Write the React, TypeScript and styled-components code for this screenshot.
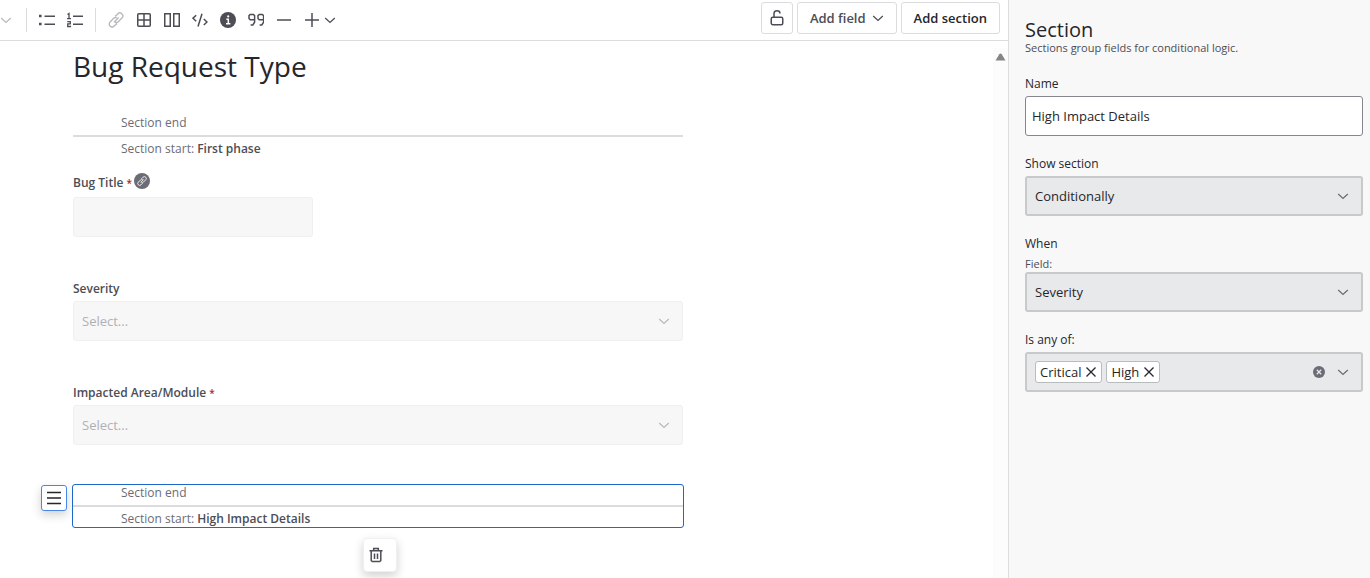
import React from "react";
import styled, { createGlobalStyle, css } from "styled-components";

const GlobalStyle = createGlobalStyle`
  *, *::before, *::after { box-sizing: border-box; }
  body {
    margin: 0;
    background: #ffffff;
    color: #26262b;
    font-family: "Open Sans", "Noto Sans", sans-serif;
    font-size: 13px;
  }
  button, input, select { font: inherit; color: inherit; }
  h1, h2, p { margin: 0; font-weight: 400; }
`;

const Page = styled.div`
  display: flex;
  min-height: 100vh;
`;

const Editor = styled.main`
  flex: 1;
  min-width: 0;
  display: flex;
  flex-direction: column;
`;

const Toolbar = styled.div`
  display: flex;
  align-items: center;
  height: 41px;
  padding-right: 8px;
  border-bottom: 1px solid #dcdcde;
`;

const ToolButton = styled.button<{ $faded?: boolean; $narrow?: boolean }>`
  display: flex;
  align-items: center;
  justify-content: center;
  width: ${(p) => (p.$narrow ? 12 : 28)}px;
  height: 28px;
  padding: 0;
  border: 0;
  background: none;
  color: ${(p) => (p.$faded ? "#b9b9c0" : "#4c4d55")};
`;

const InsertGroup = styled.div`
  display: flex;
  ${ToolButton} + ${ToolButton} {
    margin-left: -2px;
  }
`;

const Separator = styled.span`
  width: 1px;
  height: 24px;
  margin: 0 6px;
  background: #dcdcde;
`;

const LeadSeparator = styled(Separator)`
  margin-left: 14px;
`;

const Actions = styled.div`
  display: flex;
  gap: 4px;
  margin-left: auto;
  padding-bottom: 4px;
`;

const ActionButton = styled.button<{ $strong?: boolean; $square?: boolean }>`
  display: flex;
  align-items: center;
  justify-content: center;
  gap: 6px;
  height: 32px;
  width: ${(p) => (p.$square ? "32px" : "auto")};
  padding: 0 ${(p) => (p.$square ? 0 : 12)}px;
  border: 1px solid #dcdcde;
  border-radius: 3px;
  background: #ffffff;
  color: ${(p) => (p.$strong ? "#26262b" : "#4c4d55")};
  font-weight: 600;
  white-space: nowrap;
`;

const Canvas = styled.div`
  flex: 1;
  display: flex;
`;

const Document = styled.div`
  flex: 1;
  min-width: 0;
  padding: 8px 40px 0 73px;
`;

const Column = styled.div`
  max-width: 610px;
`;

const ScrollTrack = styled.div`
  width: 15px;
  margin-top: 7px;
  padding: 5px 2px;
  background: #fcfcfc;
  svg {
    display: block;
  }
`;

const Title = styled.h1`
  margin-bottom: 32px;
  font-size: 28px;
  line-height: 34px;
`;

const Break = styled.div<{ $selected?: boolean }>`
  position: relative;
  margin-bottom: 16px;
  color: #6b6c76;
  font-size: 12px;
  line-height: 16px;
  ${(p) =>
    p.$selected &&
    css`
      outline: 1px solid #1f69cc;
      border-radius: 2px;
    `}
`;

const BreakEnd = styled.div`
  padding: 0 48px 4px;
  border-bottom: 2px solid #dcdcde;
`;

const BreakStart = styled.div`
  padding: 4px 48px 0;
  strong {
    color: #4c4d55;
    font-weight: 600;
  }
`;

const floating = css`
  position: absolute;
  display: flex;
  align-items: center;
  padding: 0;
  background: #ffffff;
  box-shadow: 0 4px 10px rgba(20, 30, 30, 0.2);
`;

const DragHandle = styled.button`
  ${floating}
  top: 0;
  left: -32px;
  width: 26px;
  height: 26px;
  justify-content: center;
  border: 1px solid #4a86e8;
  border-radius: 3px;
  color: #26262b;
`;

const DeleteButton = styled.button`
  ${floating}
  top: 53px;
  left: 290px;
  width: 34px;
  height: 34px;
  padding-left: 4px;
  border: 1px solid #f0f0f0;
  border-radius: 4px;
  color: #4c4d55;
`;

const Field = styled.div`
  margin-bottom: 40px;
`;

const LabelRow = styled.div<{ $badge?: boolean }>`
  display: flex;
  align-items: ${(p) => (p.$badge ? "center" : "flex-end")};
  gap: 2px;
  height: 20px;
  margin-bottom: 4px;
`;

const FieldLabel = styled.label`
  color: #4c4d55;
  font-size: 12px;
  line-height: 16px;
  font-weight: 600;
  span {
    color: #b3261e;
    font-size: 10px;
    vertical-align: top;
  }
`;

const LinkBadge = styled.span`
  display: flex;
  align-items: center;
  justify-content: center;
  width: 16px;
  height: 16px;
  margin-bottom: 4px;
  border-radius: 50%;
  background: #6b6c76;
  color: #ffffff;
`;

const PreviewInput = styled.input`
  display: block;
  width: 240px;
  height: 40px;
  padding: 0 8px;
  border: 1px solid #f0f0f0;
  border-radius: 3px;
  background: #f7f7f7;
`;

const SelectWrap = styled.div<{ $faded?: boolean }>`
  display: grid;
  align-items: center;
  color: ${(p) => (p.$faded ? "#b9b9c0" : "#6b6c76")};
  > * {
    grid-area: 1 / 1;
  }
  > svg {
    justify-self: end;
    margin-right: ${(p) => (p.$faded ? 13 : 14)}px;
    pointer-events: none;
  }
`;

const Select = styled.select<{ $preview?: boolean }>`
  appearance: none;
  width: 100%;
  height: 40px;
  padding: 0 8px;
  border: ${(p) => (p.$preview ? "1px solid #f0f0f0" : "2px solid #c8caca")};
  border-radius: 3px;
  background: ${(p) => (p.$preview ? "#f7f7f7" : "#e8e9eb")};
  color: ${(p) => (p.$preview ? "#b0b0b6" : "#26262b")};
  opacity: 1;
`;

const Panel = styled.aside`
  width: 362px;
  padding: 20px 7px 16px 16px;
  border-left: 1px solid #dcdcde;
  background: #f8f8f8;
`;

const PanelTitle = styled.h2`
  font-size: 20px;
  line-height: 20px;
`;

const PanelHint = styled.p`
  margin-bottom: 20px;
  color: #4c4d55;
  font-size: 11px;
  line-height: 16px;
`;

const PanelField = styled.div`
  margin-bottom: 20px;
`;

const PanelLabel = styled.label`
  display: block;
  padding-bottom: 4px;
  font-size: 12px;
  line-height: 16px;
`;

const PanelSubLabel = styled.label`
  display: block;
  font-size: 11px;
  line-height: 16px;
  color: #4c4d55;
`;

const NameInput = styled.input`
  display: block;
  width: 100%;
  height: 40px;
  padding: 0 6px;
  border: 1px solid #85868f;
  border-radius: 3px;
  background: #ffffff;
`;

const TagBox = styled.div`
  display: flex;
  align-items: center;
  gap: 4px;
  height: 40px;
  padding: 0 12px 0 8px;
  border: 2px solid #c8caca;
  border-radius: 3px;
  background: #e8e9eb;
`;

const Tag = styled.span`
  display: flex;
  align-items: center;
  gap: 4px;
  height: 22px;
  padding: 0 4px;
  border: 1px solid #b9bcbc;
  border-radius: 3px;
  background: #ffffff;
`;

const BareButton = styled.button`
  display: flex;
  padding: 0;
  border: 0;
  background: none;
`;

const TagControls = styled.div`
  display: flex;
  align-items: center;
  gap: 12px;
  margin-left: auto;
  color: #6b6c76;
`;

type IconProps = { size?: number; width?: number; children: React.ReactNode };

const Icon = ({ size = 16, width = 1.5, children }: IconProps) => (
  <svg
    width={size}
    height={size}
    viewBox={`0 0 ${size} ${size}`}
    fill="none"
    stroke="currentColor"
    strokeWidth={width}
    aria-hidden="true"
  >
    {children}
  </svg>
);

const Chevron = () => (
  <Icon size={12} width={1.3}>
    <path d="M1.2 4l4.8 4.4L10.8 4" />
  </Icon>
);

const LinkIcon = ({ size = 16 }: { size?: number }) => (
  <svg width={size} height={size} viewBox="0 0 16 16" fill="none" stroke="currentColor" strokeWidth="1.4" aria-hidden="true">
    <path d="M6 10.2L10.6 5.6M7 4.6l2.7-2.7a2.9 2.9 0 0 1 4.2 4.2l-3.6 3.6a2.9 2.9 0 0 1-3.2.6M9 11.4l-2.7 2.7a2.9 2.9 0 0 1-4.2-4.2l3.6-3.6a2.9 2.9 0 0 1 3.2-.6" />
  </svg>
);

const BulletsIcon = () => (
  <Icon>
    <path d="M5.5 4.2H16M5.5 12.2H16" />
    <path d="M0 4h2.6M0 12h2.6" strokeWidth="2.6" />
  </Icon>
);

const NumbersIcon = () => (
  <Icon>
    <path d="M6 4.2h10M6 12.2h10" />
    <path d="M.5 2.5L2 1.5v5.2M0 6.7h4M.3 9.7h3v2.2H.7v2.6h3.4" strokeWidth="1.3" />
  </Icon>
);

const TableIcon = () => (
  <Icon>
    <rect x="1.75" y="1.75" width="12.5" height="12.5" rx="1" />
    <path d="M8 2v12M2 8h12" />
  </Icon>
);

const ColumnsIcon = () => (
  <Icon>
    <rect x=".75" y="1.75" width="5.5" height="12.5" />
    <rect x="9.75" y="1.75" width="5.5" height="12.5" />
  </Icon>
);

const CodeIcon = () => (
  <Icon>
    <path d="M4.2 3.2L1 6.2l3.2 3M11.8 7l3.2 3-3.2 3M10 1.8L6 14.4" />
  </Icon>
);

const InfoIcon = () => (
  <Icon>
    <circle cx="8" cy="8" r="8" fill="currentColor" stroke="none" />
    <path d="M6.3 7.2h2v4.4M6 11.8h4.4" stroke="#ffffff" />
    <circle cx="8.2" cy="4.4" r="1.1" fill="#ffffff" stroke="none" />
  </Icon>
);

const QuoteIcon = () => (
  <Icon>
    <path d="M6.4 7.7H2.2L1 6.5V3.6l1.2-1.2h3.2l1.2 1.2v6.6L4.8 13H2.6M15.4 7.7h-4.2L10 6.5V3.6l1.2-1.2h3.2l1.2 1.2v6.6L13.8 13h-2.2" />
  </Icon>
);

const LockIcon = () => (
  <Icon>
    <rect x="2.25" y="7.25" width="11.5" height="7.5" rx="1.5" />
    <path d="M5 7V3.8C5 2 6.2 .8 8 .8s3 1 3 2.6" />
  </Icon>
);

const CloseIcon = () => (
  <Icon size={12} width={1.3}>
    <path d="M1.5 1.5l9 9M10.5 1.5l-9 9" />
  </Icon>
);

export default function App() {
  return (
    <Page>
      <GlobalStyle />
      <Editor>
        <Toolbar>
          <ToolButton $faded $narrow aria-label="More styles"><Chevron /></ToolButton>
          <LeadSeparator />
          <ToolButton aria-label="Bulleted list"><BulletsIcon /></ToolButton>
          <ToolButton aria-label="Numbered list"><NumbersIcon /></ToolButton>
          <Separator />
          <ToolButton $faded aria-label="Link"><LinkIcon /></ToolButton>
          <ToolButton aria-label="Table"><TableIcon /></ToolButton>
          <ToolButton aria-label="Columns"><ColumnsIcon /></ToolButton>
          <ToolButton aria-label="Code"><CodeIcon /></ToolButton>
          <ToolButton aria-label="Info panel"><InfoIcon /></ToolButton>
          <ToolButton aria-label="Quote"><QuoteIcon /></ToolButton>
          <ToolButton aria-label="Divider"><Icon><path d="M1 8h14" /></Icon></ToolButton>
          <InsertGroup>
            <ToolButton aria-label="Insert"><Icon><path d="M1 8h14M8 1v14" /></Icon></ToolButton>
            <ToolButton $narrow aria-label="Insert menu"><Chevron /></ToolButton>
          </InsertGroup>
          <Actions>
            <ActionButton $square aria-label="Unlock"><LockIcon /></ActionButton>
            <ActionButton>Add field <Chevron /></ActionButton>
            <ActionButton $strong>Add section</ActionButton>
          </Actions>
        </Toolbar>

        <Canvas>
          <Document>
            <Column>
              <Title>Bug Request Type</Title>

              <Break>
                <BreakEnd>Section end</BreakEnd>
                <BreakStart>Section start: <strong>First phase</strong></BreakStart>
              </Break>

              <Field>
                <LabelRow $badge>
                  <FieldLabel htmlFor="bug-title">Bug Title <span>*</span></FieldLabel>
                  <LinkBadge><LinkIcon size={10} /></LinkBadge>
                </LabelRow>
                <PreviewInput id="bug-title" disabled />
              </Field>

              <Field>
                <LabelRow>
                  <FieldLabel htmlFor="severity">Severity</FieldLabel>
                </LabelRow>
                <SelectWrap $faded>
                  <Select $preview id="severity" disabled><option>Select...</option></Select>
                  <Chevron />
                </SelectWrap>
              </Field>

              <Field>
                <LabelRow>
                  <FieldLabel htmlFor="impacted-area">Impacted Area/Module <span>*</span></FieldLabel>
                </LabelRow>
                <SelectWrap $faded>
                  <Select $preview id="impacted-area" disabled><option>Select...</option></Select>
                  <Chevron />
                </SelectWrap>
              </Field>

              <Break $selected>
                <BreakEnd>Section end</BreakEnd>
                <BreakStart>Section start: <strong>High Impact Details</strong></BreakStart>
                <DragHandle aria-label="Move section">
                  <Icon><path d="M1 2.5h14M1 8h14M1 13.5h14" /></Icon>
                </DragHandle>
                <DeleteButton aria-label="Delete section">
                  <Icon>
                    <path d="M1.5 3.7h13M5.7 3.5V1.5h4.6v2M3.2 4v9.5l1 1h7.6l1-1V4M6.5 6.5v5.5M9.5 6.5v5.5" />
                  </Icon>
                </DeleteButton>
              </Break>
            </Column>
          </Document>
          <ScrollTrack>
            <svg width="11" height="8" viewBox="0 0 11 8" aria-hidden="true">
              <path d="M.5 7.5L4.3 1.2q1.2-1.2 2.4 0l3.8 6.3z" fill="#858585" />
            </svg>
          </ScrollTrack>
        </Canvas>
      </Editor>

      <Panel>
        <PanelTitle>Section</PanelTitle>
        <PanelHint>Sections group fields for conditional logic.</PanelHint>

        <PanelField>
          <PanelLabel htmlFor="section-name">Name</PanelLabel>
          <NameInput id="section-name" defaultValue="High Impact Details" />
        </PanelField>

        <PanelField>
          <PanelLabel htmlFor="show-section">Show section</PanelLabel>
          <SelectWrap>
            <Select id="show-section"><option>Conditionally</option></Select>
            <Chevron />
          </SelectWrap>
        </PanelField>

        <PanelField>
          <PanelLabel as="div">When</PanelLabel>
          <PanelSubLabel htmlFor="when-field">Field:</PanelSubLabel>
          <SelectWrap>
            <Select id="when-field"><option>Severity</option></Select>
            <Chevron />
          </SelectWrap>
        </PanelField>

        <PanelField>
          <PanelLabel as="div" id="any-of">Is any of:</PanelLabel>
          <TagBox role="group" aria-labelledby="any-of">
            <Tag>Critical <BareButton aria-label="Remove Critical"><CloseIcon /></BareButton></Tag>
            <Tag>High <BareButton aria-label="Remove High"><CloseIcon /></BareButton></Tag>
            <TagControls>
              <BareButton aria-label="Clear all">
                <Icon size={12}>
                  <circle cx="6" cy="6" r="6" fill="currentColor" stroke="none" />
                  <path d="M3.8 3.8l4.4 4.4M8.2 3.8l-4.4 4.4" stroke="#e8e9eb" strokeWidth="1.3" />
                </Icon>
              </BareButton>
              <BareButton aria-label="Open options"><Chevron /></BareButton>
            </TagControls>
          </TagBox>
        </PanelField>
      </Panel>
    </Page>
  );
}
